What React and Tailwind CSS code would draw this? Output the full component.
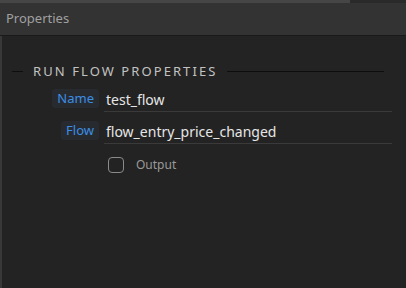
export default function App() {
    const font = { fontFamily: '"Noto Sans", "Open Sans", sans-serif' };

    return (
        <div className="w-[406px] h-[288px] bg-[#232323] flex flex-col overflow-hidden" style={font}>

            <div className="h-[3px] flex">
                <div className="w-[350px] bg-[#464646]"></div>
                <div className="flex-1 bg-[#2a2a2a]"></div>
            </div>

            <div className="h-[33px] bg-[#333333] border-b border-[#1a1a1a] flex items-center pl-[6px]">
                <span className="text-[13px] text-[#a0a0a0]">Properties</span>
            </div>

            <div className="flex-1 border-l-2 border-[#383838] pt-[27px]">

                <div className="flex items-center h-[16px] pl-[10px]">
                    <div className="w-[11px] h-px bg-[#0e0e0e]"></div>
                    <span className="ml-[10px] text-[13px] tracking-[0.16em] text-[#c2c2c2] leading-none">
                        RUN FLOW PROPERTIES
                    </span>
                    <div className="ml-[10px] w-[157px] h-px bg-[#0e0e0e]"></div>
                </div>

                <PropRow label="Name" value="test_flow" className="mt-[10px]" />
                <PropRow label="Flow" value="flow_entry_price_changed" className="mt-[9px]" />

                <div className="flex items-center mt-[12px] pl-[106px]">
                    <div className="w-[16px] h-[16px] rounded-[4px] border border-[#8a8a8a]"></div>
                    <span className="ml-[12px] text-[12px] text-[#9a9a9a]">Output</span>
                </div>

            </div>

        </div>
    );
}

function PropRow({ label, value, className }) {
    return (
        <div className={`flex items-start ${className}`}>
            <div className="w-[97px] flex justify-end">
                <span className="h-[19px] px-[5px] rounded-[3px] bg-[#272b30] text-[13px] leading-[19px] text-[#3b8ee6]">
                    {label}
                </span>
            </div>
            <div className="ml-[5px] w-[288px] h-[23px] border-b border-[#3a3a3a] pl-[2px] text-[14px] leading-[22px] text-[#e6e6e6]">
                {value}
            </div>
        </div>
    );
}
